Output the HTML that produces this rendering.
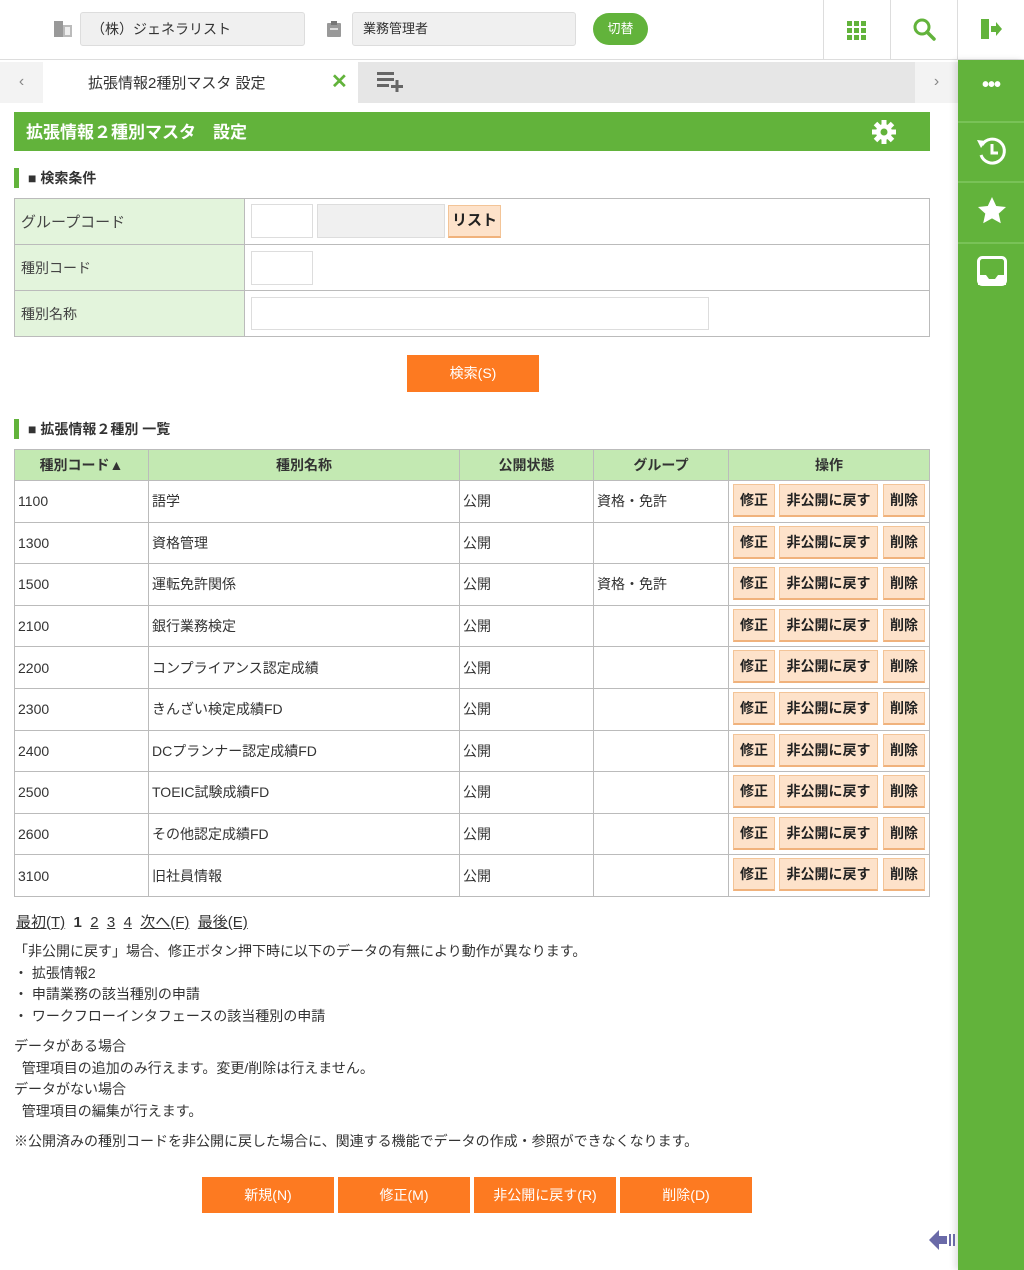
<!DOCTYPE html>
<html><head><meta charset="utf-8"><style>
*{box-sizing:border-box;margin:0;padding:0}
body{width:1024px;height:1270px;position:relative;overflow:hidden;background:#fff;font-family:"Liberation Sans","Noto Sans CJK JP",sans-serif;font-size:14px;color:#333}
.a{position:absolute}
.top{left:0;top:0;width:1024px;height:60px;border-bottom:1px solid #ddd;background:#fff}
.inp{background:#f0f0f0;border:1px solid #ddd;border-radius:3px;font-size:14px;padding-left:10px;line-height:32px;color:#333}
.vd{width:1px;height:60px;background:#ddd;top:0}
.side{left:958px;top:60px;width:66px;height:1210px;background:#62b33b;box-shadow:-3px 0 6px rgba(0,0,0,.12)}
.sdiv{left:958px;width:66px;height:2px;background:#79c257}
.hd{font-weight:bold;font-size:14px;color:#333}
.hd:before{content:"";position:absolute;left:-14px;top:0px;width:5px;height:20px;background:#62b33b}
table{border-collapse:collapse;table-layout:fixed}
.st td{border:1px solid #bbb;height:46px;font-size:14px}
.st td.l{background:#e3f4dc;padding-left:6px;color:#444}
.box{position:absolute;border:1px solid #ddd;background:#fff}
.lt td,.lt th{border:1px solid #bbb;font-size:14px}
.lt th{background:#c3e9b2;height:31px;font-weight:bold;color:#333}
.lt td{height:41.6px;padding-left:3px;color:#333}
.b{display:inline-block;background:#fde2ca;border:1px solid #f3c497;border-bottom:2px solid #f0b27c;height:33px;line-height:30px;font-weight:bold;font-size:14px;color:#222;text-align:center;vertical-align:middle}
.ob{background:#fd7a21;color:#fff;text-align:center;font-size:14px}
.p{font-size:14px;color:#333;line-height:21.5px}
u{text-decoration:underline}
</style></head><body>
<div class="a top"></div>
<svg class="a" style="left:54px;top:21px" width="18" height="16"><rect x="0" y="0" width="9" height="16" fill="#999"/><rect x="9" y="4" width="9" height="12" fill="#bbb"/><rect x="11" y="6" width="5" height="8" fill="#eee"/></svg>
<div class="a inp" style="left:80px;top:12px;width:225px;height:34px">（株）ジェネラリスト</div>
<svg class="a" style="left:327px;top:21px" width="14" height="16"><rect x="0" y="2" width="14" height="14" rx="1" fill="#999"/><rect x="4" y="0" width="6" height="4" fill="#777"/><rect x="3" y="7" width="8" height="2" fill="#ddd"/></svg>
<div class="a inp" style="left:352px;top:12px;width:224px;height:34px;font-size:13px">業務管理者</div>
<div class="a" style="left:593px;top:13px;width:55px;height:32px;border-radius:16px;background:#62b33b;color:#fff;text-align:center;line-height:32px;font-size:13px">切替</div>
<div class="a vd" style="left:823px"></div><div class="a vd" style="left:890px"></div><div class="a vd" style="left:957px"></div>
<svg class="a" style="left:847px;top:21px" width="19" height="19" fill="#62b33b"><rect x="0" y="0" width="5" height="5"/><rect x="7" y="0" width="5" height="5"/><rect x="14" y="0" width="5" height="5"/><rect x="0" y="7" width="5" height="5"/><rect x="7" y="7" width="5" height="5"/><rect x="14" y="7" width="5" height="5"/><rect x="0" y="14" width="5" height="5"/><rect x="7" y="14" width="5" height="5"/><rect x="14" y="14" width="5" height="5"/></svg>
<svg class="a" style="left:913px;top:18px" width="24" height="24"><circle cx="9" cy="9" r="7" fill="none" stroke="#62b33b" stroke-width="3"/><line x1="14" y1="14" x2="21" y2="21" stroke="#62b33b" stroke-width="3.5" stroke-linecap="round"/></svg>
<svg class="a" style="left:979px;top:17px" width="24" height="26"><rect x="2" y="2" width="8" height="20" fill="#62b33b"/><path d="M12 9h5V5l6 7-6 7v-4h-5z" fill="#62b33b"/></svg>
<div class="a" style="left:0;top:62px;width:43px;height:41px;background:#f3f3f3;color:#888;text-align:center;line-height:40px;font-size:16px">&#8249;</div>
<div class="a" style="left:43px;top:62px;width:315px;height:41px;background:#fff"></div>
<div class="a" style="left:88px;top:72px;font-size:15px;color:#333">拡張情報2種別マスタ 設定</div>
<div class="a" style="left:331px;top:69px;font-size:20px;font-weight:bold;color:#62b33b">✕</div>
<div class="a" style="left:358px;top:62px;width:557px;height:41px;background:#e6e6e6"></div>
<svg class="a" style="left:377px;top:72px" width="27" height="20" fill="#666"><rect x="0" y="0" width="17" height="3"/><rect x="0" y="6" width="17" height="3"/><rect x="0" y="12" width="12" height="3"/><rect x="14" y="13" width="12" height="3"/><rect x="18.5" y="8" width="3" height="12"/></svg>
<div class="a" style="left:915px;top:62px;width:43px;height:41px;background:#f3f3f3;color:#888;text-align:center;line-height:40px;font-size:16px">&#8250;</div>
<div class="a side"></div>
<div class="a sdiv" style="top:121px"></div><div class="a sdiv" style="top:181px"></div><div class="a sdiv" style="top:242px"></div>
<div class="a" style="left:958px;top:74px;width:66px;text-align:center;color:#fff;font-size:20px;font-weight:bold;letter-spacing:-1px">•••</div>
<svg class="a" style="left:976px;top:135px" width="32" height="32"><path d="M6 10A12 12 0 1 1 5 20" fill="none" stroke="#fff" stroke-width="3"/><path d="M1 5l9 1-5 7z" fill="#fff"/><path d="M16 9v9h6" fill="none" stroke="#fff" stroke-width="3"/></svg>
<svg class="a" style="left:978px;top:197px" width="28" height="27"><path d="M14 0l4.2 9 9.8 1-7.3 6.6 2.1 9.7L14 21.4 5.2 26.3l2.1-9.7L0 10l9.8-1z" fill="#fff"/></svg>
<svg class="a" style="left:977px;top:256px" width="30" height="30"><rect x="1.5" y="1.5" width="27" height="27" rx="4" fill="none" stroke="#fff" stroke-width="3"/><path d="M1 19h8l3 4h6l3-4h8v10H1z" fill="#fff"/></svg>
<div class="a" style="left:14px;top:112px;width:916px;height:39px;background:#62b33b"></div>
<div class="a" style="left:26px;top:118px;color:#fff;font-size:17px;font-weight:bold">拡張情報２種別マスタ　設定</div>
<svg class="a" style="left:871px;top:119px" width="26" height="26"><g fill="#fff"><circle cx="13" cy="13" r="8"/><g stroke="#fff" stroke-width="5"><line x1="13" y1="1" x2="13" y2="25"/><line x1="1" y1="13" x2="25" y2="13"/><line x1="4.5" y1="4.5" x2="21.5" y2="21.5"/><line x1="21.5" y1="4.5" x2="4.5" y2="21.5"/></g></g><circle cx="13" cy="13" r="3.5" fill="#62b33b"/></svg>
<div class="a hd" style="left:28px;top:168px">■ 検索条件</div>
<table class="a st" style="left:14px;top:198px;width:916px"><colgroup><col style="width:230px"><col></colgroup>
<tr><td class="l" style="font-size:15px">グループコード</td><td></td></tr>
<tr><td class="l">種別コード</td><td></td></tr>
<tr><td class="l">種別名称</td><td></td></tr></table>
<div class="box" style="left:251px;top:204px;width:62px;height:34px"></div>
<div class="box" style="left:317px;top:204px;width:128px;height:34px;background:#f0f0f0"></div>
<div class="a b" style="left:448px;top:205px;width:53px;height:33px;font-size:15px">リスト</div>
<div class="box" style="left:251px;top:251px;width:62px;height:34px"></div>
<div class="box" style="left:251px;top:297px;width:458px;height:33px"></div>
<div class="a ob" style="left:407px;top:355px;width:132px;height:37px;line-height:37px">検索(S)</div>
<div class="a hd" style="left:28px;top:419px">■ 拡張情報２種別 一覧</div>
<table class="a lt" style="left:14px;top:449px;width:916px"><colgroup><col style="width:134px"><col style="width:311px"><col style="width:134px"><col style="width:135px"><col></colgroup>
<tr><th>種別コード▲</th><th>種別名称</th><th>公開状態</th><th>グループ</th><th>操作</th></tr>
<tr><td>1100</td><td>語学</td><td>公開</td><td>資格・免許</td><td></td></tr>
<tr><td>1300</td><td>資格管理</td><td>公開</td><td></td><td></td></tr>
<tr><td>1500</td><td>運転免許関係</td><td>公開</td><td>資格・免許</td><td></td></tr>
<tr><td>2100</td><td>銀行業務検定</td><td>公開</td><td></td><td></td></tr>
<tr><td>2200</td><td>コンプライアンス認定成績</td><td>公開</td><td></td><td></td></tr>
<tr><td>2300</td><td>きんざい検定成績FD</td><td>公開</td><td></td><td></td></tr>
<tr><td>2400</td><td>DCプランナー認定成績FD</td><td>公開</td><td></td><td></td></tr>
<tr><td>2500</td><td>TOEIC試験成績FD</td><td>公開</td><td></td><td></td></tr>
<tr><td>2600</td><td>その他認定成績FD</td><td>公開</td><td></td><td></td></tr>
<tr><td>3100</td><td>旧社員情報</td><td>公開</td><td></td><td></td></tr>
</table>
<div id="ops"></div>
<script>
var h='';for(var i=0;i<10;i++){var y=484+i*41.6;h+='<div class="a b" style="left:733px;top:'+y+'px;width:42px">修正</div><div class="a b" style="left:779px;top:'+y+'px;width:99px">非公開に戻す</div><div class="a b" style="left:883px;top:'+y+'px;width:42px">削除</div>';}document.getElementById('ops').innerHTML=h;
</script>
<div class="a" style="left:16px;top:911px;font-size:15px;color:#333"><u>最初(T)</u>&nbsp; <b>1</b>&nbsp; <u>2</u>&nbsp; <u>3</u>&nbsp; <u>4</u>&nbsp; <u>次へ(F)</u>&nbsp; <u>最後(E)</u></div>
<div class="a p" style="left:14px;top:941px">「非公開に戻す」場合、修正ボタン押下時に以下のデータの有無により動作が異なります。<br>・ 拡張情報2<br>・ 申請業務の該当種別の申請<br>・ ワークフローインタフェースの該当種別の申請</div>
<div class="a p" style="left:14px;top:1036px">データがある場合<br>&nbsp;&nbsp;管理項目の追加のみ行えます。変更/削除は行えません。<br>データがない場合<br>&nbsp;&nbsp;管理項目の編集が行えます。</div>
<div class="a p" style="left:14px;top:1131px">※公開済みの種別コードを非公開に戻した場合に、関連する機能でデータの作成・参照ができなくなります。</div>
<div class="a ob" style="left:202px;top:1177px;width:132px;height:36px;line-height:36px">新規(N)</div>
<div class="a ob" style="left:338px;top:1177px;width:132px;height:36px;line-height:36px">修正(M)</div>
<div class="a ob" style="left:474px;top:1177px;width:142px;height:36px;line-height:36px">非公開に戻す(R)</div>
<div class="a ob" style="left:620px;top:1177px;width:132px;height:36px;line-height:36px">削除(D)</div>
<svg class="a" style="left:929px;top:1229px" width="29" height="22"><path d="M0 11l10-10v6h8v8h-8v6z" fill="#6a6aa8"/><rect x="20" y="5" width="2" height="12" fill="#6a6aa8"/><rect x="24" y="5" width="2" height="12" fill="#6a6aa8"/></svg>
</body></html>
